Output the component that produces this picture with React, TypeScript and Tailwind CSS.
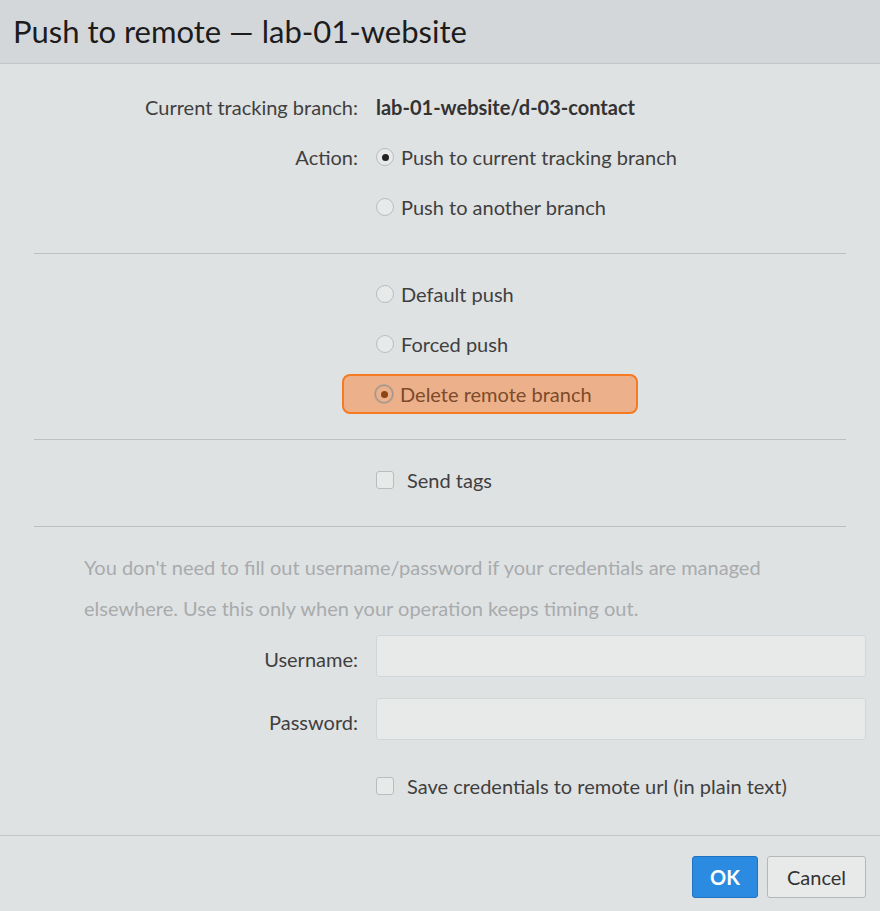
import React from "react";

type RadioProps = { checked?: boolean; label: string; tone?: "normal" | "danger" };

function Radio({ checked, label, tone = "normal" }: RadioProps) {
  const danger = tone === "danger";
  return (
    <span className="flex items-center gap-[7px]">
      <span
        className={
          "flex h-[18px] w-[18px] items-center justify-center rounded-full border " +
          (danger
            ? "border-[#8f9597] bg-[#ecb18a] shadow-[0_0_0_1px_rgba(120,130,135,0.35)]"
            : "border-[#b9bdbf] bg-[#e8eaea]")
        }
      >
        {checked ? (
          <span className={"h-[7px] w-[7px] rounded-full " + (danger ? "bg-[#8a4518]" : "bg-[#222]")} />
        ) : null}
      </span>
      <span className={danger ? "text-[#7d4a2a]" : "text-[#3f3f3f]"}>{label}</span>
    </span>
  );
}

function Checkbox({ label }: { label: string }) {
  return (
    <span className="flex items-center gap-[13px]">
      <span className="h-[18px] w-[18px] rounded-[3px] border border-[#b9bdbf] bg-[#e8eaea]" />
      <span className="text-[#3f3f3f]">{label}</span>
    </span>
  );
}

function Row({ label, children, bold }: { label?: string; children: React.ReactNode; bold?: boolean }) {
  return (
    <div className="grid h-[50px] grid-cols-[358px_1fr] items-center gap-x-[18px]">
      <div className="text-right text-[#3f3f3f]">{label}</div>
      <div className={bold ? "font-bold text-[#333]" : ""}>{children}</div>
    </div>
  );
}

function Divider() {
  return <div className="mx-[34px] h-px bg-[#bcc0c2]" />;
}

export default function App() {
  return (
    <div
      className="flex h-[911px] w-[880px] flex-col bg-[#dfe2e3] text-[20px]"
      style={{ fontFamily: "Lato, 'Open Sans', sans-serif" }}
    >
      <div className="flex h-[64px] items-center border-b border-[#c2c6c8] bg-[#d4d7d9] pl-[13px]">
        <h1 className="text-[31px] font-normal text-[#1c1c1c]">Push to remote — lab-01-website</h1>
      </div>

      <div className="flex-1 pt-[18px]">
        <Row label="Current tracking branch:" bold>
          lab-01-website/d-03-contact
        </Row>
        <Row label="Action:">
          <Radio checked label="Push to current tracking branch" />
        </Row>
        <Row>
          <Radio label="Push to another branch" />
        </Row>

        <div className="mt-[21px]">
          <Divider />
        </div>

        <div className="mt-[15px]">
          <Row>
            <Radio label="Default push" />
          </Row>
          <Row>
            <Radio label="Forced push" />
          </Row>
          <Row>
            <div className="-ml-[34px] flex h-[40px] w-[296px] items-center rounded-[8px] border-2 border-[#f57a22] bg-[#ecb18a] pl-[31px]">
              <Radio checked tone="danger" label="Delete remote branch" />
            </div>
          </Row>
        </div>

        <div className="mt-[20px]">
          <Divider />
        </div>

        <div className="mt-[15px]">
          <Row>
            <Checkbox label="Send tags" />
          </Row>
        </div>

        <div className="mt-[21px]">
          <Divider />
        </div>

        <p className="mt-[20px] ml-[84px] w-[705px] text-[20px] leading-[41px] text-[#a8abad]">
          You don't need to fill out username/password if your credentials are managed elsewhere. Use this only when
          your operation keeps timing out.
        </p>

        <div className="mt-[6px] flex flex-col gap-[21px] pr-[14px]">
          <div className="grid grid-cols-[358px_1fr] items-center gap-x-[18px]">
            <label className="pt-[6px] text-right text-[#3f3f3f]">Username:</label>
            <input className="h-[42px] rounded-[3px] border border-[#d3d6d7] bg-[#e8eaea] px-2 outline-none" />
          </div>
          <div className="grid grid-cols-[358px_1fr] items-center gap-x-[18px]">
            <label className="pt-[6px] text-right text-[#3f3f3f]">Password:</label>
            <input
              type="password"
              className="h-[42px] rounded-[3px] border border-[#d3d6d7] bg-[#e8eaea] px-2 outline-none"
            />
          </div>
        </div>

        <div className="mt-[21px]">
          <Row>
            <Checkbox label="Save credentials to remote url (in plain text)" />
          </Row>
        </div>
      </div>

      <div className="flex h-[76px] items-start justify-end gap-[9px] border-t border-[#c2c6c8] pr-[14px] pt-[20px]">
        <button className="h-[42px] w-[66px] rounded-[3px] border border-[#1f73c2] bg-[#2a8be0] text-[20px] font-bold text-white">
          OK
        </button>
        <button className="h-[42px] w-[99px] rounded-[3px] border border-[#b4b8ba] bg-[#e8eaea] text-[20px] text-[#333]">
          Cancel
        </button>
      </div>
    </div>
  );
}
